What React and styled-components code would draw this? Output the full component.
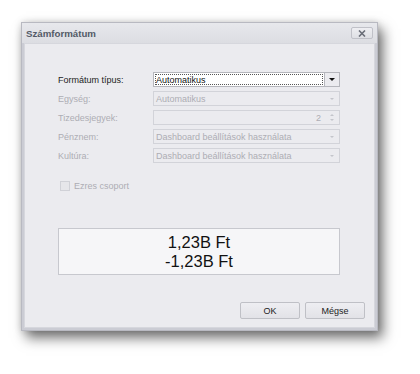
import { Fragment } from 'react'
import styled, { createGlobalStyle } from 'styled-components'

const GlobalStyle = createGlobalStyle`
  body {
    margin: 0;
    background: #ffffff;
    font-family: 'Liberation Sans', Arial, sans-serif;
  }
`

const Page = styled.div`
  width: 420px;
  height: 374px;
  padding: 22px 0 0 21px;
  box-sizing: border-box;
`

const Dialog = styled.div`
  width: 357px;
  height: 309px;
  box-sizing: border-box;
  display: flex;
  flex-direction: column;
  background: #cbccd4;
  border: 1px solid #b8b9c1;
  padding: 0 2px 2px;
  box-shadow: 5px 7px 12px rgba(0, 0, 0, 0.55), 0 0 7px rgba(0, 0, 0, 0.15);
`

const TitleBar = styled.div`
  height: 20px;
  margin: 0 -2px;
  padding: 0 4px;
  display: flex;
  align-items: center;
  justify-content: space-between;
  background: linear-gradient(#e7e8ec, #dcdde2);
`

const Title = styled.span`
  font-size: 9.7px;
  font-weight: bold;
  color: #535a66;
`

const CloseButton = styled.div`
  width: 20px;
  height: 10px;
  border: 1px solid #c0c1c8;
  border-radius: 2px;
  background: linear-gradient(#eeeef2, #dedfe4);
  display: flex;
  align-items: center;
  justify-content: center;
`

const Content = styled.div`
  flex: 1;
  display: flex;
  flex-direction: column;
  background: #ebebef;
  border: 1px solid #d6d7dd;
  padding: 28px 34px 8px 33px;
`

const Form = styled.div`
  display: grid;
  grid-template-columns: 95px 1fr;
  row-gap: 4px;
  align-items: center;
`

const Label = styled.span`
  font-size: 9px;
  color: ${(p) => (p.$disabled ? '#adadb4' : '#1c1c1c')};
`

const Field = styled.div`
  height: 15px;
  box-sizing: border-box;
  display: flex;
  align-items: center;
  border: 1px solid ${(p) => (p.$active ? '#b5b6bc' : '#d2d3d9')};
  background: ${(p) => (p.$active ? '#ffffff' : '#ebebef')};
  font-size: 9px;
  color: ${(p) => (p.$active ? '#111111' : '#adadb4')};
`

const FieldText = styled.div`
  flex: 1;
  height: 100%;
  box-sizing: border-box;
  display: flex;
  align-items: center;
  justify-content: ${(p) => (p.$right ? 'flex-end' : 'flex-start')};
  padding: 0 ${(p) => (p.$right ? '4px' : '2px')};
  outline: ${(p) => (p.$focus ? '1px dotted #555' : 'none')};
  outline-offset: -2px;
  background: ${(p) => (p.$focus ? '#ffffff' : 'transparent')};
`

const DropButton = styled.div`
  width: 14px;
  height: 100%;
  display: flex;
  align-items: center;
  justify-content: center;
  background: ${(p) => (p.$active ? '#ebebef' : 'transparent')};
  border-left: ${(p) => (p.$active ? '1px solid #b5b6bc' : 'none')};
`

const Arrow = styled.div`
  width: 0;
  height: 0;
  border-left: ${(p) => p.$size}px solid transparent;
  border-right: ${(p) => p.$size}px solid transparent;
  border-top: ${(p) => p.$size}px solid ${(p) => p.$color};
`

const Spin = styled.div`
  width: 14px;
  display: flex;
  flex-direction: column;
  align-items: center;
  gap: 3px;
`

const UpArrow = styled.div`
  width: 0;
  height: 0;
  border-left: 2.5px solid transparent;
  border-right: 2.5px solid transparent;
  border-bottom: 2.5px solid #c4c5cb;
`

const DownArrow = styled(UpArrow)`
  border-bottom: none;
  border-top: 2.5px solid #c4c5cb;
`

const CheckRow = styled.div`
  display: flex;
  align-items: center;
  gap: 4px;
  margin: 18px 0 0 2px;
`

const CheckBox = styled.div`
  width: 8px;
  height: 8px;
  border: 1px solid #d0d1d7;
  background: #e6e6ea;
`

const Preview = styled.div`
  margin-top: 37px;
  height: 47px;
  box-sizing: border-box;
  border: 1px solid #c7c8ce;
  background: #f6f6f8;
  display: flex;
  flex-direction: column;
  align-items: center;
  justify-content: center;
  font-size: 16.5px;
  line-height: 19px;
  color: #111111;
`

const Buttons = styled.div`
  margin-top: auto;
  margin-right: -25px;
  display: flex;
  justify-content: flex-end;
  gap: 5px;
`

const Button = styled.div`
  width: 60px;
  height: 17px;
  box-sizing: border-box;
  border: 1px solid #bfc0c6;
  border-radius: 2px;
  background: linear-gradient(#eeeef2, #e2e2e7);
  display: flex;
  align-items: center;
  justify-content: center;
  font-size: 9px;
  color: #1c1c1c;
`

const rows = [
  { label: 'Egység:', value: 'Automatikus' },
  { label: 'Tizedesjegyek:', value: '2', spin: true },
  { label: 'Pénznem:', value: 'Dashboard beállítások használata' },
  { label: 'Kultúra:', value: 'Dashboard beállítások használata' },
]

export default function App() {
  return (
    <>
      <GlobalStyle />
      <Page>
        <Dialog>
          <TitleBar>
            <Title>Számformátum</Title>
            <CloseButton>
              <svg width="8" height="7" viewBox="0 0 8 7">
                <path d="M1 0.5 L7 6.5 M7 0.5 L1 6.5" stroke="#6a6e78" strokeWidth="1.6" />
              </svg>
            </CloseButton>
          </TitleBar>
          <Content>
            <Form>
              <Label>Formátum típus:</Label>
              <Field $active>
                <FieldText $focus>Automatikus</FieldText>
                <DropButton $active>
                  <Arrow $color="#111" $size={3} />
                </DropButton>
              </Field>
              {rows.map((r) => (
                <Fragment key={r.label}>
                  <Label $disabled>{r.label}</Label>
                  <Field>
                    <FieldText $right={r.spin}>{r.value}</FieldText>
                    {r.spin ? (
                      <Spin>
                        <UpArrow />
                        <DownArrow />
                      </Spin>
                    ) : (
                      <DropButton>
                        <Arrow $color="#c4c5cb" $size={2.5} />
                      </DropButton>
                    )}
                  </Field>
                </Fragment>
              ))}
            </Form>
            <CheckRow>
              <CheckBox />
              <Label $disabled>Ezres csoport</Label>
            </CheckRow>
            <Preview>
              <div>1,23B Ft</div>
              <div>-1,23B Ft</div>
            </Preview>
            <Buttons>
              <Button>OK</Button>
              <Button>Mégse</Button>
            </Buttons>
          </Content>
        </Dialog>
      </Page>
    </>
  )
}
